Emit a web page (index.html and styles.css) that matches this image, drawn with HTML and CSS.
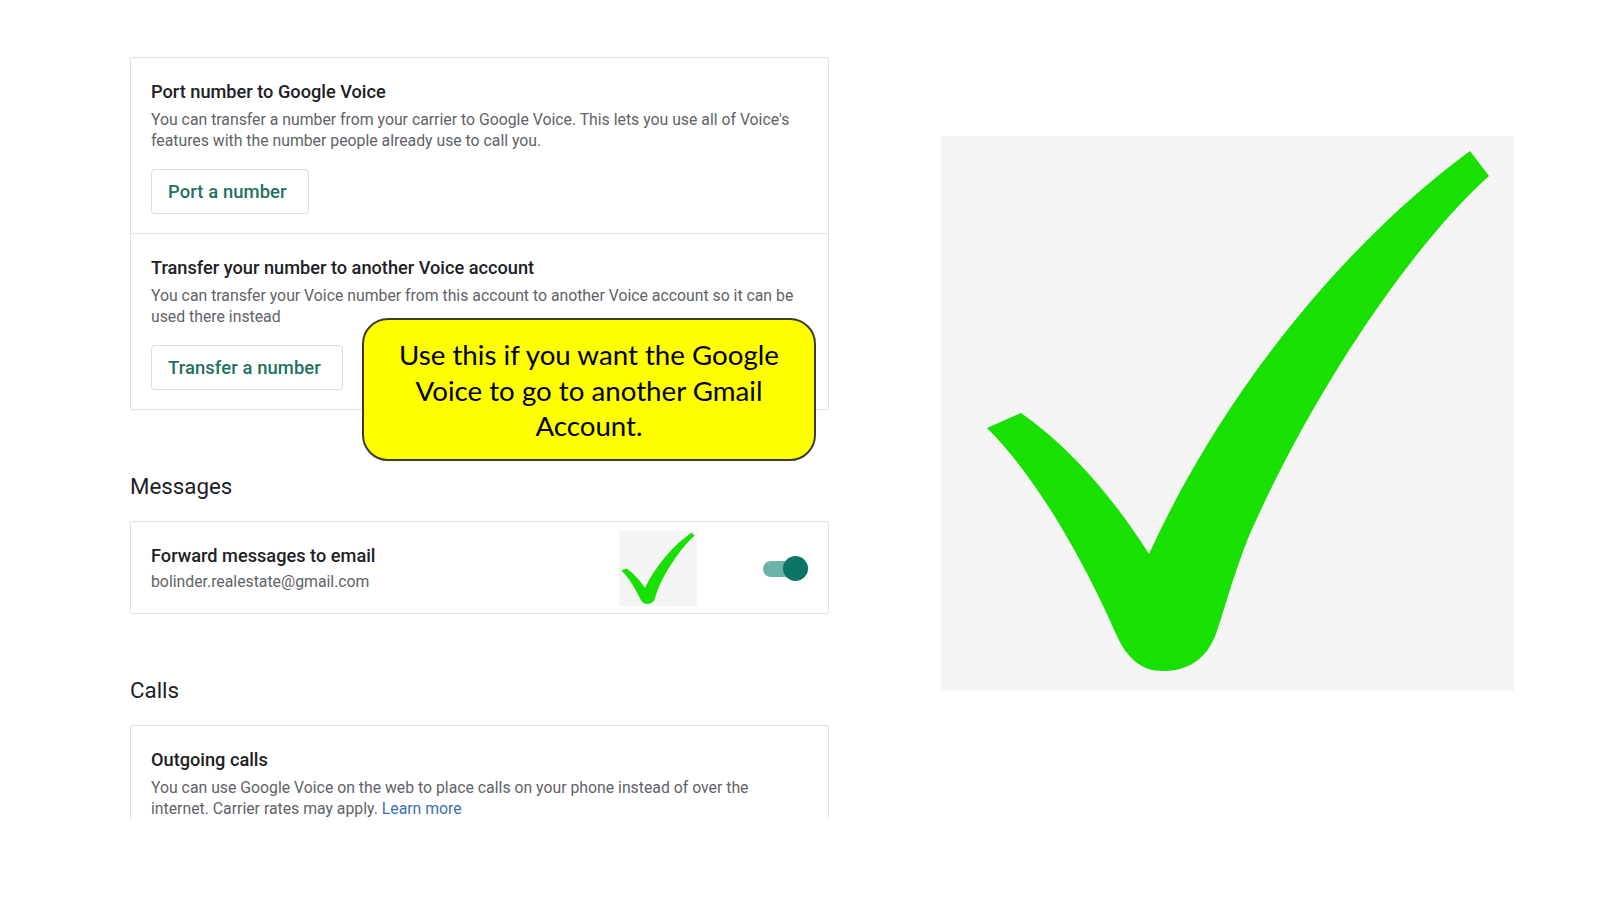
FILE: index.html
```html
<!DOCTYPE html>
<html lang="en">
<head>
<meta charset="utf-8">
<title>Google Voice settings</title>
<link rel="stylesheet" href="styles.css">
</head>
<body>
<div class="page">
  <div class="settings">
    <div class="card">
      <div class="section">
        <div class="title">Port number to Google Voice</div>
        <div class="desc">You can transfer a number from your carrier to Google Voice. This lets you use all of Voice's features with the number people already use to call you.</div>
        <button class="btn">Port a number</button>
      </div>
      <div class="section">
        <div class="title">Transfer your number to another Voice account</div>
        <div class="desc">You can transfer your Voice number from this account to another Voice account so it can be used there instead</div>
        <button class="btn">Transfer a number</button>
      </div>
    </div>

    <h2 class="heading">Messages</h2>
    <div class="card">
      <div class="row">
        <div class="row-text">
          <div class="title">Forward messages to email</div>
          <div class="desc">bolinder.realestate@gmail.com</div>
        </div>
        <div class="mini-check">
          <svg viewBox="30 5 535 545" preserveAspectRatio="none" width="78" height="75">
            <path fill="#18e000" d="M46,292 L80,277 C120,305 165,350 208,418 C280,260 400,110 529,15 L548,40 C470,110 372,255 308,400 C292,440 283,475 276,495 C266,525 245,535 222,535 C200,535 186,522 176,500 C150,440 100,345 46,292 Z"/>
          </svg>
        </div>
        <div class="toggle"><span class="track"></span><span class="thumb"></span></div>
      </div>
    </div>

    <h2 class="heading">Calls</h2>
    <div class="card">
      <div class="section">
        <div class="title">Outgoing calls</div>
        <div class="desc">You can use Google Voice on the web to place calls on your phone instead of over the internet. Carrier rates may apply. <a class="link" href="#">Learn more</a></div>
      </div>
    </div>

    <div class="callout">Use this if you want the Google Voice to go to another Gmail Account.</div>
  </div>

  <div class="big-check">
    <svg viewBox="0 0 573 555" width="573" height="555">
      <path fill="#18e000" d="M46,292 L80,277 C120,305 165,350 208,418 C280,260 400,110 529,15 L548,40 C470,110 372,255 308,400 C292,440 283,475 276,495 C266,525 245,535 222,535 C200,535 186,522 176,500 C150,440 100,345 46,292 Z"/>
    </svg>
  </div>
</div>
</body>
</html>
```

FILE: styles.css
```css
* { box-sizing: border-box; }
html, body { margin: 0; padding: 0; background: #ffffff; }
body { font-family: Roboto, "Liberation Sans", Arial, sans-serif; color: #202124; }

.page {
  display: flex;
  align-items: flex-start;
  padding: 57px 0 0 130px;
  gap: 112px;
}

.settings {
  position: relative;
  width: 699px;
  height: 762px;
  overflow: hidden;
  flex: none;
}

.card {
  border: 1px solid #dfe1e5;
  border-radius: 2px;
  background: #fff;
}

.section {
  padding: 22px 20px 19px 20px;
}
.section + .section { border-top: 1px solid #dfe1e5; }

.title {
  font-size: 18.2px;
  font-weight: 500;
  line-height: 24px;
  color: #202124;
}

.desc {
  margin-top: 6px;
  font-size: 15.8px;
  line-height: 20.5px;
  color: #5f6368;
}

.btn {
  margin-top: 18px;
  height: 45px;
  padding: 0 21px 0 16px;
  background: #fff;
  border: 1px solid #dadce0;
  border-radius: 4px;
  font-family: Roboto, "Liberation Sans", Arial, sans-serif;
  font-size: 18.4px;
  font-weight: 500;
  letter-spacing: 0.1px;
  color: #1f7161;
  display: block;
}

.heading {
  margin: 61px 0 20px 0;
  font-size: 22.3px;
  font-weight: 400;
  line-height: 30px;
  color: #202124;
}

.row {
  display: flex;
  align-items: center;
  padding: 9px 20px 8px 20px;
  height: 91px;
}
.row-text { flex: 1; padding-top: 1px; }
.row-text .desc { margin-top: 4px; }

.mini-check {
  width: 78px;
  height: 75px;
  background: #f5f5f5;
  margin-right: 66px;
  display: flex;
}

.toggle {
  position: relative;
  width: 45px;
  height: 25px;
}
.track {
  position: absolute;
  left: 0;
  top: 5px;
  width: 40px;
  height: 16px;
  border-radius: 8px;
  background: #6db2a8;
}
.thumb {
  position: absolute;
  right: 0;
  top: 0;
  width: 25px;
  height: 25px;
  border-radius: 50%;
  background: #0b7566;
}

.link { color: #3a72b0; text-decoration: none; }

.callout {
  position: absolute;
  left: 232px;
  top: 261px;
  width: 454px;
  height: 143px;
  padding: 17px 16px 0 16px;
  background: #ffff00;
  border: 2px solid #3c3c30;
  border-radius: 26px;
  font-family: Lato, "Open Sans", sans-serif;
  font-size: 27.7px;
  line-height: 35.5px;
  text-align: center;
  color: #000;
}

.big-check {
  margin-top: 79px;
  width: 573px;
  height: 555px;
  background: #f5f5f5;
  flex: none;
}
.big-check svg { display: block; }
```
